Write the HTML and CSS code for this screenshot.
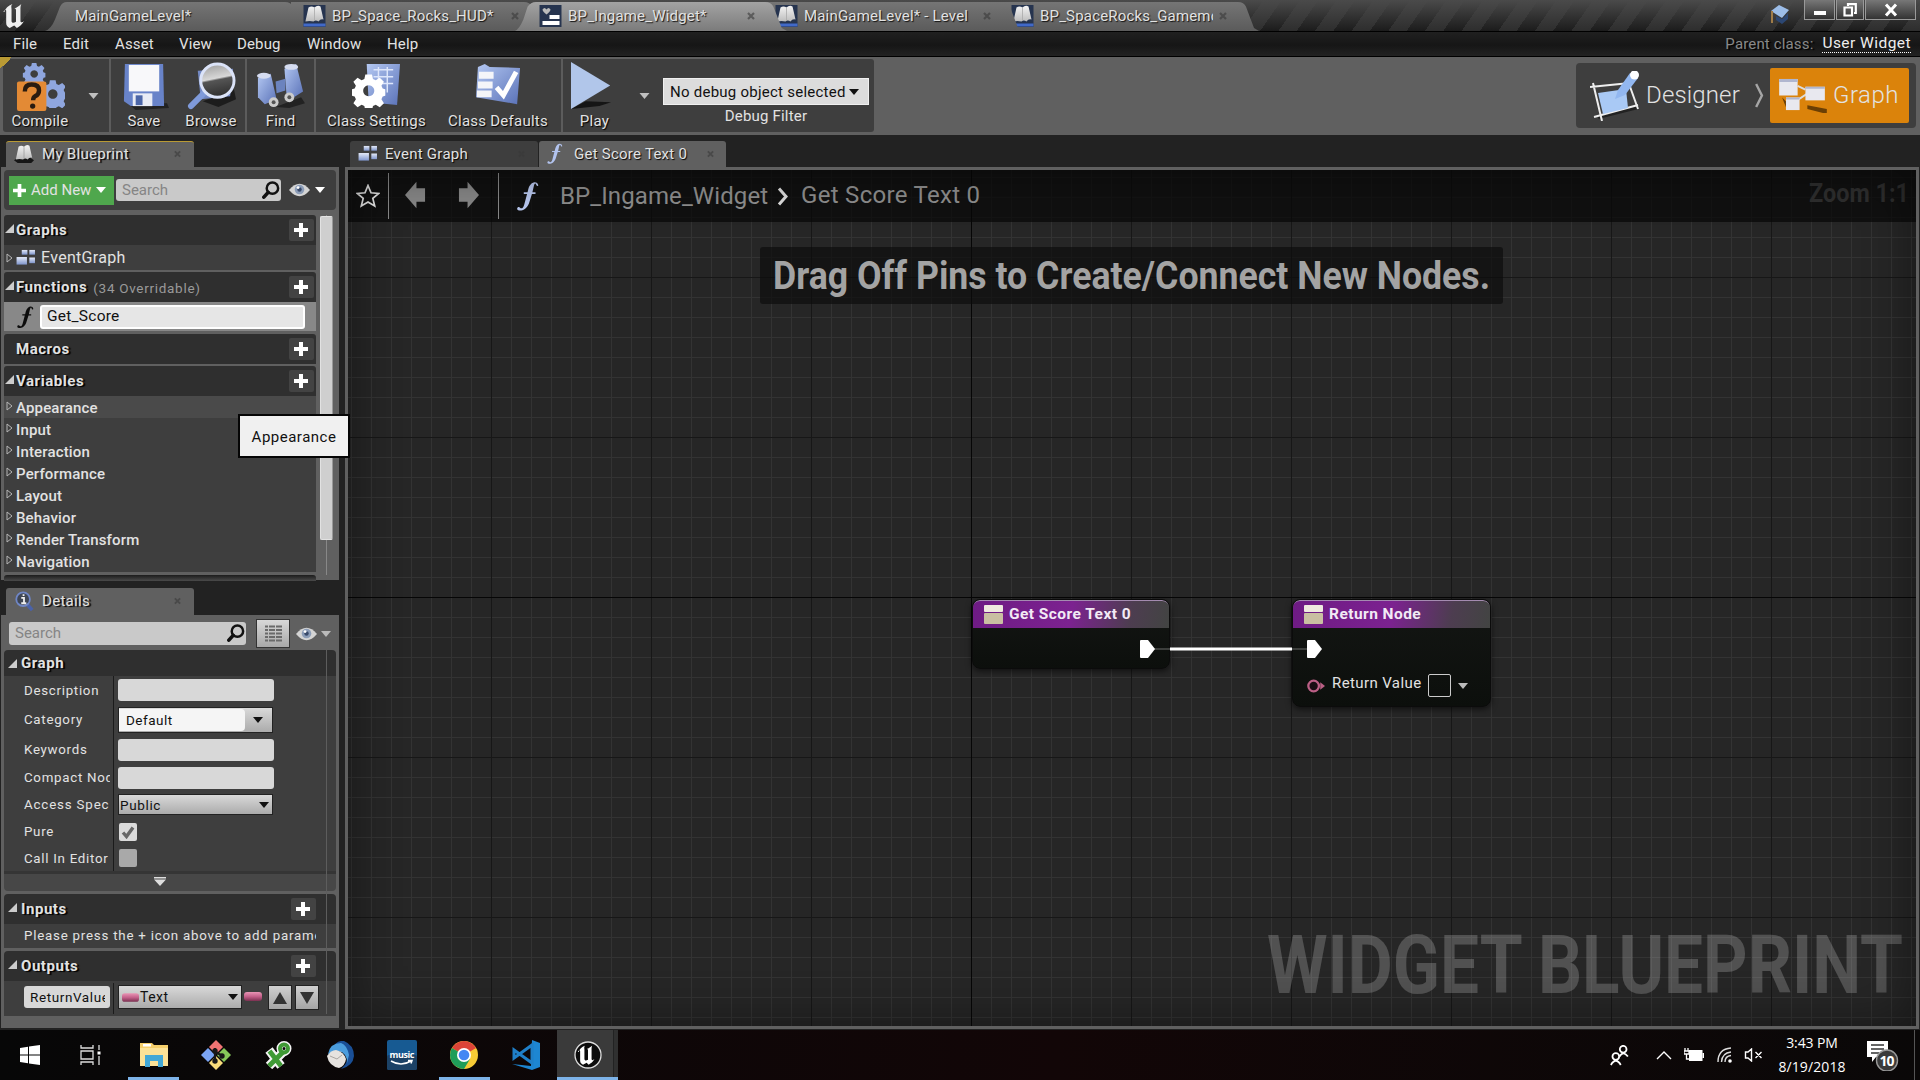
FILE: index.html
```html
<!DOCTYPE html>
<html lang="en">
<head>
<meta charset="utf-8">
<title>BP_Ingame_Widget</title>
<link rel="stylesheet" href="styles.css">
</head>
<body>
<svg class="defs" width="0" height="0">
  <defs>
    <linearGradient id="blue" x1="0" y1="0" x2="1" y2="1"><stop offset="0" stop-color="#b4c8f2"/><stop offset="1" stop-color="#5a72b8"/></linearGradient>
    <linearGradient id="pale" x1="0" y1="0" x2="0" y2="1"><stop offset="0" stop-color="#e4eaf8"/><stop offset="1" stop-color="#7f95cc"/></linearGradient>
    <linearGradient id="page" x1="0" y1="0" x2="0" y2="1"><stop offset="0" stop-color="#f4f4f4"/><stop offset="1" stop-color="#bdbdbd"/></linearGradient>
    <linearGradient id="tabg" x1="0" y1="0" x2="0" y2="1"><stop offset="0" stop-color="#757575"/><stop offset="1" stop-color="#5b5b5b"/></linearGradient>
    <linearGradient id="tabon" x1="0" y1="0" x2="0" y2="1"><stop offset="0" stop-color="#a3a3a3"/><stop offset="1" stop-color="#7b7b7b"/></linearGradient>
    <linearGradient id="lens" x1="0" y1="0" x2=".2" y2="1"><stop offset="0" stop-color="#999"/><stop offset=".5" stop-color="#d8d8d8"/><stop offset=".56" stop-color="#555"/><stop offset="1" stop-color="#333"/></linearGradient>
    <linearGradient id="pill" x1="0" y1="0" x2="0" y2="1"><stop offset="0" stop-color="#e995b5"/><stop offset=".5" stop-color="#c4608a"/><stop offset="1" stop-color="#7a3050"/></linearGradient>
  </defs>
  <symbol id="gear" viewBox="-12 -12 24 24"><path fill-rule="evenodd" d="M-2.4-11.5h4.8l.7 3.2 2 .9 2.9-1.8 3 3-1.800 2.900.900 2 3 .7v4.200l-3 .7-.900 2 1.800 2.900-3 3-2.900-1.800-2 .9-.7 3.200h-4.800l-.7-3.200-2-.9-2.900 1.800-3-3 1.800-2.900-.9-2-3.100-.7v-4.200l3.100-.7.9-2-1.800-2.900 3-3 2.900 1.800 2-.9zM0-3.800a4 4 0 1 0 .1 0z"/></symbol>
  <symbol id="book" viewBox="0 0 22 22"><path d="M0 18 4 15l14 0 4 3-3 3H4z" fill="#161616"/><path d="M2 17 5 3q3-2 6 0 3-3 6-1l3 13q-3-1-5 2-3-2-5 0-4-1-8 0z" fill="url(#page)"/><path d="M11 3.500V16" stroke="#999" stroke-width=".8" fill="none"/></symbol>
  <symbol id="bookicon" viewBox="0 0 22 22"><rect width="22" height="22" fill="#26344f"/><rect y="18.500" width="22" height="3" fill="#4169c8"/><path d="M2 16 5 2.500q3-2 6 0 3-3 6-1l3 13q-3-1-5 2-3-2-5 0-4-1-8 0z" fill="url(#page)"/><path d="M11 3v13" stroke="#aaa" stroke-width=".8" fill="none"/></symbol>
  <symbol id="nodes" viewBox="0 0 20 18"><g fill="url(#pale)"><rect x="5.500" y="1" width="6" height="5"/><rect x="13.500" y="1" width="6" height="5"/><rect x="0" y="8.500" width="11" height="8"/><rect x="13.500" y="9" width="6" height="6"/></g></symbol>
  <symbol id="func" viewBox="0 0 24 32"><path d="M23 4.500C22-.5 15 0 12.500 8l-1 4H7.500v1.800H11L8 25c-1 4-3 5-4.500 3.500C2.500 27 0 28 .5 30c.6 2.500 9 3 12.500-6l3.200-10.200H20V12h-3.300l1.300-5.500c.7-4 2-4.500 2.500-3 .5 2 2.500 2.500 2.500 1z"/></symbol>
  <symbol id="x" viewBox="0 0 8 8"><path d="M1 1l6 6M7 1 1 7" stroke="#3a3a3a" stroke-width="2.200"/></symbol>
  <symbol id="plus" viewBox="0 0 14 14"><path d="M5 0h4v5h5v4H9v5H5V9H0V5h5z" fill="#fff"/></symbol>
  <symbol id="mag" viewBox="0 0 18 20"><circle cx="10.500" cy="7.500" r="6" fill="none" stroke="#111" stroke-width="2.600"/><path d="M6 12 1.500 17" stroke="#111" stroke-width="3.800" stroke-linecap="round"/></symbol>
  <symbol id="eye" viewBox="0 0 22 14"><path d="M0 7Q11-6 22 7 11 20 0 7z" fill="#d4d4d4"/><circle cx="11" cy="6.500" r="5" fill="#8c9db8"/><circle cx="11" cy="6.500" r="2.300" fill="#394a6b"/><circle cx="9.500" cy="4.500" r="1.500" fill="#fff"/></symbol>
  <symbol id="down" viewBox="0 0 10 6"><path d="M0 0h10L5 6z"/></symbol>
  <symbol id="tri" viewBox="0 0 9 9"><path d="M9 0v9H0z" fill="#ccc"/></symbol>
  <symbol id="out" viewBox="0 0 7 10"><path d="M1 1v8l5-4z" fill="none" stroke="#b5b5b5"/></symbol>
  <symbol id="ue" viewBox="0 0 28 28"><path d="M1 9C2 5 5 2 10 0 8 2 9 4 9 6v13c0 2 2 3 5 1V7c0-2-1-2-2-2 3-1 6-3 8-5-1 2-1 4-1 6v13c0 2 2 2 4 0-2 4-5 6-8 8l-3-3-5 3c-3-2-4-3-4-6V8c0-2-1-2-4 1z"/></symbol>
  <symbol id="ret" viewBox="0 0 19 19"><rect width="19" height="7" rx="1" fill="#efeadf"/><rect y="8" width="19" height="11" rx="1" fill="#c9bfa2"/></symbol>
</svg>

<header class="titlebar">
  <svg class="ue-logo" viewBox="0 0 28 28"><use href="#ue"/></svg>
  <nav class="doctabs">
    <div class="doctab first"><svg class="shape" viewBox="0 0 260 30" preserveAspectRatio="none"><path d="M0 30Q6 28 10 18L15 5Q17 0 22 0H240Q246 0 248 5L256 27 260 30z" fill="url(#tabg)"/></svg><span>MainGameLevel*</span></div>
    <div class="doctab z1"><svg class="shape" viewBox="0 0 260 30" preserveAspectRatio="none"><path d="M0 30V0H233Q239 0 241 5L249 27 254 30z" fill="url(#tabg)"/></svg><svg class="ticon"><use href="#bookicon"/></svg><span>BP_Space_Rocks_HUD*</span><svg class="close"><use href="#x"/></svg></div>
    <div class="doctab active"><svg class="shape" viewBox="0 0 260 30" preserveAspectRatio="none"><path d="M0 30Q4 28 8 18L12 5Q15 0 20 0H239Q245 0 247 5L255 27 260 30z" fill="url(#tabon)"/></svg><svg class="ticon" viewBox="0 0 22 22"><rect width="22" height="22" fill="#26344f"/><path d="M3 4.500q2-3 4 0 2-3 4 0 0 2-4 5-4-3-4-5z" fill="#bbb"/><rect x="10" y="10" width="10" height="4" fill="#fff"/><rect x="3" y="16" width="17" height="4" fill="#fff"/></svg><span>BP_Ingame_Widget*</span><svg class="close"><use href="#x"/></svg></div>
    <div class="doctab z2"><svg class="shape" viewBox="0 0 260 30" preserveAspectRatio="none"><path d="M0 30V0H239Q245 0 247 5L255 27 260 30z" fill="url(#tabg)"/></svg><svg class="ticon"><use href="#bookicon"/></svg><span>MainGameLevel* - Level</span><svg class="close"><use href="#x"/></svg></div>
    <div class="doctab z1"><svg class="shape" viewBox="0 0 260 30" preserveAspectRatio="none"><path d="M0 30V0H239Q245 0 247 5L255 27 260 30z" fill="url(#tabg)"/></svg><svg class="ticon"><use href="#bookicon"/></svg><span>BP_SpaceRocks_Gamemode</span><svg class="close"><use href="#x"/></svg></div>
  </nav>
  <svg class="hat" viewBox="0 0 20 20"><path d="M1 6 9 0l10 5-7 8z" fill="#9cbde8"/><path d="M6 11l6 3 6-6v6l-6 5-6-4z" fill="#2c4773"/><path d="M2 6v12" stroke="#a07c48" stroke-width="2"/></svg>
  <div class="winbtns">
    <span class="wb min"><svg viewBox="0 0 14 12"><rect x="1" y="7" width="12" height="4" fill="#fff"/></svg></span>
    <span class="wb res"><svg viewBox="0 0 14 14"><path d="M5 3V1.200h7.800V10H11M1.500 4.500h7.500v8H1.500z" fill="none" stroke="#fff" stroke-width="2.200"/></svg></span>
    <span class="wb cls"><svg viewBox="0 0 14 14"><path d="M2 1.500 12 12.500M12 1.500 2 12.500" stroke="#fff" stroke-width="3"/></svg></span>
  </div>
</header>

<div class="menubar">
  <span class="m1">File</span><span class="m2">Edit</span><span class="m3">Asset</span><span class="m4">View</span><span class="m5">Debug</span><span class="m6">Window</span><span class="m7">Help</span>
  <span class="parent">Parent class:</span><a class="pclass">User Widget</a>
</div>

<div class="toolbar">
  <div class="tools">
    <div class="tool compile"><svg viewBox="0 0 50 50"><g fill="#8fa6de"><use href="#gear" x="7" y="0" width="23" height="24"/><use href="#gear" x="23" y="18" width="29" height="29"/></g><rect x="1" y="20" width="30" height="30" rx="2" fill="#e38a35"/><path d="M9 30q0-7 7-7 7.500 0 7.500 6 0 4-4 6-2 1-2 4" fill="none" stroke="#2a1c10" stroke-width="4.500"/><circle cx="17" cy="45" r="2.700" fill="#2a1c10"/></svg><span>Compile</span></div>
    <div class="drop"><svg><use href="#down"/></svg></div>
    <div class="tool save"><svg viewBox="0 0 50 50"><path d="M8 42h40l2 5-34 2z" fill="#222"/><path d="M5 2h39l1 43H11l-7-5z" fill="#6883c9"/><path d="M9 3h31v27H9z" fill="#f8f8fa"/><rect x="13" y="32" width="20" height="13" fill="#e9ecf5"/><rect x="16" y="34" width="7" height="10" fill="#4c66a8"/></svg><span>Save</span></div>
    <div class="tool browse"><svg viewBox="0 0 50 50"><path d="M16 40l32-12 2 10-18 8z" fill="#1c1c1c"/><path d="M11 9l36-2-3 28-30 3z" fill="#7389c4"/><path d="M17 32 4 45" stroke="#7f9ada" stroke-width="6" stroke-linecap="round"/><circle cx="31" cy="19" r="17" fill="url(#lens)" stroke="#dbe3f8" stroke-width="3"/></svg><span>Browse</span></div>
    <div class="tool find"><svg viewBox="0 0 50 50"><path d="M20 46l26-10 4 6-16 5z" fill="#222"/><path d="M2 16 15 12l6 26-12 5-7-7z" fill="url(#blue)"/><path d="M29 7 41 2l7 28-11 7-6-5z" fill="url(#blue)"/><path d="M20 20l10-3v12l-9 3z" fill="#6b83be"/><ellipse cx="8" cy="14" rx="7" ry="3" fill="#d5dcf0"/><ellipse cx="36" cy="5" rx="7" ry="3" fill="#d5dcf0"/><circle cx="18" cy="41" r="5" fill="#ccc"/><circle cx="34" cy="36" r="5" fill="#ccc"/><circle cx="18" cy="41" r="2" fill="#555"/><circle cx="34" cy="36" r="2" fill="#555"/></svg><span>Find</span></div>
    <div class="tool settings"><svg viewBox="0 0 50 50"><path d="M15 2h34l-3 42-29-3z" fill="url(#blue)"/><path d="M22 8h20M22 15h20M22 22h20M27 5v26M36 5v26" stroke="#dde6fb" stroke-width="1.500"/><use href="#gear" x="0" y="11" width="34" height="36" fill="#fff"/></svg><span>Class Settings</span></div>
    <div class="tool defaults"><svg viewBox="0 0 50 50"><path d="M4 5l7-3 5 3 31 1-3 37-42-7z" fill="url(#blue)"/><path d="M5 10h15v7H5zM4 20h15v7H4zM3 29h15v7H3z" fill="#f4f5f9"/><path d="M23 26l7 8L43 10" stroke="#fff" stroke-width="5" fill="none"/></svg><span>Class Defaults</span></div>
    <div class="tool play"><svg viewBox="0 0 50 50"><path d="M1 48 16 40 42 41 30 45z" fill="#151515"/><path d="M1 0 41 24 1 48z" fill="#b1c6ea"/></svg><span>Play</span></div>
    <div class="drop d2"><svg><use href="#down"/></svg></div>
    <div class="debug"><div class="debugsel"><span>No debug object selected</span><svg><use href="#down"/></svg></div><p>Debug Filter</p></div>
  </div>
  <div class="modes">
    <svg class="dicon" viewBox="0 0 50 50"><path d="M8 46 48 36" stroke="#222" stroke-width="4"/><path d="M0 16 40 12M4 46 48 34M3 12 12 50M38 10 48 38" stroke="#eee" stroke-width="2"/><path d="M8 22 36 18 38 37 13 43z" fill="#a9c9f5"/><path d="M25 28l3-9L40 2l8 5L35 24z" fill="#92b7f0"/><circle cx="44.500" cy="4" r="4.500" fill="#fff"/></svg>
    <span class="dlabel">Designer</span>
    <svg class="chev" viewBox="0 0 12 26"><path d="M2 1l6 12-6 12" fill="none" stroke="#a5a5a5" stroke-width="2.500"/></svg>
    <div class="graphbtn"><svg viewBox="0 0 50 36"><path d="M8 24 4 20 8 30zM30 28l20 4v5l-20-5z" fill="#6b3f04"/><path d="M20 8l8 4M18 24l12-8" stroke="#ddd" stroke-width="2"/><rect x="1" y="1" width="19" height="17" fill="#e8e8ef"/><rect x="28" y="9" width="20" height="14" fill="#e8e8ef"/><rect x="8" y="20" width="14" height="13" fill="#e8e8ef"/><path d="M1 1h19v3H1zM28 9h20v2H28zM8 20h14v2H8z" fill="#b0b6cf"/></svg><span>Graph</span></div>
  </div>
</div>

<main class="work">
  <aside class="side">
    <div class="ptab blue-tab"><svg class="pi"><use href="#book"/></svg><span>My Blueprint</span><svg class="close"><use href="#x"/></svg></div>
    <section class="panel mybp">
      <div class="bpbar">
        <div class="addnew"><svg class="pl"><use href="#plus"/></svg><span>Add New</span><svg class="dn"><use href="#down"/></svg></div>
        <div class="search"><span>Search</span><svg><use href="#mag"/></svg></div>
        <svg class="eye"><use href="#eye"/></svg><svg class="dn"><use href="#down"/></svg>
      </div>
      <div class="bpbody">
        <div class="list">
          <div class="cat"><svg class="tri"><use href="#tri"/></svg><b>Graphs</b><i class="add"><svg><use href="#plus"/></svg></i></div>
          <div class="item eg"><svg class="out"><use href="#out"/></svg><svg class="ni"><use href="#nodes"/></svg><span>EventGraph</span></div>
          <div class="cat g2"><svg class="tri"><use href="#tri"/></svg><b>Functions</b><small>(34 Overridable)</small><i class="add"><svg><use href="#plus"/></svg></i></div>
          <div class="item fn"><svg class="fi"><use href="#func"/></svg><div class="rename">Get_Score</div></div>
          <div class="cat g3"><b>Macros</b><i class="add"><svg><use href="#plus"/></svg></i></div>
          <div class="cat g2"><svg class="tri"><use href="#tri"/></svg><b>Variables</b><i class="add"><svg><use href="#plus"/></svg></i></div>
          <div class="var hov"><svg class="out"><use href="#out"/></svg>Appearance</div>
          <div class="var"><svg class="out"><use href="#out"/></svg>Input</div>
          <div class="var"><svg class="out"><use href="#out"/></svg>Interaction</div>
          <div class="var"><svg class="out"><use href="#out"/></svg>Performance</div>
          <div class="var"><svg class="out"><use href="#out"/></svg>Layout</div>
          <div class="var"><svg class="out"><use href="#out"/></svg>Behavior</div>
          <div class="var"><svg class="out"><use href="#out"/></svg>Render Transform</div>
          <div class="var"><svg class="out"><use href="#out"/></svg>Navigation</div>
          <div class="peek"></div>
        </div>
        <div class="scroll"><div class="thumb"></div></div>
      </div>
      <div class="tooltip">Appearance</div>
    </section>

    <div class="ptab details-tab"><svg class="pi" viewBox="0 0 22 22"><path d="M14 14l6 7" stroke="#4a62a8" stroke-width="4"/><circle cx="10" cy="9" r="7.500" fill="#3f4654" stroke="#6f86c6" stroke-width="2"/><path d="M8 7.500h3V13M8 13.500h5.500M9.500 4.500h2" stroke="#eee" stroke-width="2" fill="none"/></svg><span>Details</span><svg class="close"><use href="#x"/></svg></div>
    <section class="panel details">
      <div class="dbar">
        <div class="search"><span>Search</span><svg><use href="#mag"/></svg></div>
        <div class="matrix"><svg viewBox="0 0 17 18"><path d="M0 1.500h17M0 5h17M0 8.500h17M0 12h17M0 15.500h17" stroke="#6a6a6a" stroke-width="2" stroke-dasharray="3 1 6 1 6 0"/></svg></div>
        <svg class="eye"><use href="#eye"/></svg><svg class="dn"><use href="#down"/></svg>
      </div>
      <div class="dbody">
        <div class="dcat top"><svg class="tri"><use href="#tri"/></svg><b>Graph</b></div>
        <div class="prop h28"><label>Description</label><div class="val"><div class="inp"></div></div></div>
        <div class="prop h31"><label>Category</label><div class="val"><div class="combo big"><span>Default</span><i><svg><use href="#down"/></svg></i></div></div></div>
        <div class="prop h29"><label>Keywords</label><div class="val"><div class="inp"></div></div></div>
        <div class="prop h27"><label>Compact Node Title</label><div class="val"><div class="inp"></div></div></div>
        <div class="prop h27"><label class="acc">Access Specifier</label><div class="val"><div class="combo flat"><span>Public</span><svg><use href="#down"/></svg></div></div></div>
        <div class="prop h27"><label>Pure</label><div class="val"><div class="check on"><svg viewBox="0 0 14 14"><path d="M2 7.500l3.500 4L12 2.500" stroke="#666" stroke-width="3.400" fill="none"/></svg></div></div></div>
        <div class="prop h26"><label>Call In Editor</label><div class="val"><div class="check"></div></div></div>
        <div class="adv"><svg viewBox="0 0 12 9"><path d="M0 0h12v1.500H0zM0 2.500h12L6 9z" fill="#ddd"/></svg></div>
        <div class="dcat"><svg class="tri"><use href="#tri"/></svg><b>Inputs</b><i class="add"><svg><use href="#plus"/></svg></i></div>
        <div class="msg"><span>Please press the + icon above to add parameters</span></div>
        <div class="dcat"><svg class="tri"><use href="#tri"/></svg><b>Outputs</b><i class="add"><svg><use href="#plus"/></svg></i></div>
        <div class="outrow">
          <div class="oname"><div class="oi">ReturnValue</div></div>
          <div class="combo txt"><svg class="pill" viewBox="0 0 18 9"><rect width="18" height="9" rx="3" fill="url(#pill)"/></svg><span>Text</span><svg class="dn"><use href="#down"/></svg></div>
          <svg class="pill" viewBox="0 0 18 9"><rect width="18" height="9" rx="3" fill="url(#pill)"/></svg>
          <div class="sq"><svg viewBox="0 0 14 12"><path d="M7 0l7 12H0z"/></svg></div>
          <div class="sq"><svg viewBox="0 0 14 12"><path d="M0 0h14L7 12z"/></svg></div>
        </div>
        <div class="vline"></div>
      </div>
    </section>
  </aside>

  <section class="editor">
    <div class="gtabs">
      <div class="gtab"><svg class="ni"><use href="#nodes"/></svg><span>Event Graph</span><svg class="close"><use href="#x"/></svg></div>
      <div class="gtab on"><svg class="fi"><use href="#func"/></svg><span>Get Score Text 0</span><svg class="close"><use href="#x"/></svg></div>
    </div>
    <div class="canvas">
      <div class="crumbs">
        <svg class="star" viewBox="0 0 24 24"><path d="M12 1.500l3 7.300 7.700.6-5.900 5 1.900 7.600L12 17.900 5.300 22l1.900-7.600-5.900-5 7.700-.6z" fill="none" stroke="#e8e8e8" stroke-width="1.700"/></svg>
        <i class="sep"></i>
        <svg class="arr" viewBox="0 0 22 28"><path d="M0 14 12 0v7h9v14h-9v7z" fill="#868686"/></svg>
        <svg class="arr r" viewBox="0 0 22 28"><path d="M22 14 10 0v7H1v14h9v7z" fill="#868686"/></svg>
        <i class="sep"></i>
        <svg class="cf"><use href="#func"/></svg>
        <span class="c1">BP_Ingame_Widget</span>
        <svg class="cc" viewBox="0 0 12 18"><path d="M2 1l7 8-7 8" fill="none" stroke="#ddd" stroke-width="3"/></svg>
        <span class="c2">Get Score Text 0</span>
        <svg class="zoom" width="100" height="28"><text x="0" y="20" textLength="100" lengthAdjust="spacingAndGlyphs">Zoom 1:1</text></svg>
      </div>
      <div class="hint"><svg width="717" height="57"><text x="0" y="42" textLength="717" lengthAdjust="spacingAndGlyphs">Drag Off Pins to Create/Connect New Nodes.</text></svg></div>
      <svg class="wire" width="154" height="4"><path d="M0 2h16M138 2h16" stroke="#3c3e3c" stroke-width="2"/><path d="M16 2h122" stroke="#fff" stroke-width="3"/></svg>
      <div class="node n1">
        <div class="nh"><svg><use href="#ret"/></svg><span>Get Score Text 0</span></div>
        <svg class="exec" viewBox="0 0 15 18"><path d="M1 0h7l7 9-7 9H1q-1 0-1-1V1q0-1 1-1z" fill="#fff"/></svg>
      </div>
      <div class="node n2">
        <div class="nh"><svg><use href="#ret"/></svg><span>Return Node</span></div>
        <svg class="exec" viewBox="0 0 15 18"><path d="M1 0h7l7 9-7 9H1q-1 0-1-1V1q0-1 1-1z" fill="#fff"/></svg>
        <div class="rv"><svg class="pin" viewBox="0 0 19 14"><circle cx="7" cy="7" r="5.600" fill="#1a0d13" stroke="#bb5f85" stroke-width="2.400"/><path d="M14 3l5 4-5 4z" fill="#bb5f85"/></svg><span>Return Value</span><i></i><svg class="dn"><use href="#down"/></svg></div>
      </div>
      <svg class="mark" width="636" height="76"><text x="0" y="67" textLength="636" lengthAdjust="spacingAndGlyphs">WIDGET BLUEPRINT</text></svg>
    </div>
  </section>
</main>

<footer class="taskbar">
  <div class="tb"><svg width="20" height="20" viewBox="0 0 20 20"><path d="M0 3l8-1.200V9.500H0zM9 1.600 20 0v9.500H9zM0 10.500h8v7.700L0 17zM9 10.500h11V20L9 18.400z" fill="#fff"/></svg></div>
  <div class="tb"><svg width="22" height="20" viewBox="0 0 22 20"><path d="M1 0v3h12V0M1 20v-3h12v3M1 6h12v8H1zM19 0v5M19 11v9" fill="none" stroke="#ddd" stroke-width="1.300"/><rect x="17.500" y="6.500" width="3" height="3" fill="#fff"/></svg></div>
  <div class="tb run"><svg width="28" height="24" viewBox="0 0 28 24"><path d="M0 0h12l2 2h14v21H0z" fill="#f5cf6b"/><path d="M0 5h28v18H0z" fill="#fbe297"/><rect x="3" y="1" width="8" height="2.500" fill="#fff"/><path d="M5 12h18v12h-5v-6h-8v6H5z" fill="#42a8d6"/></svg></div>
  <div class="tb"><svg width="30" height="30" viewBox="0 0 30 30"><path d="M15 0l7 7-7 7-7-7z" fill="#f27474"/><path d="M7 8l7 7-7 7-7-7z" fill="#7ba5f5"/><path d="M23 8l7 7-7 7-7-7z" fill="#86c95a"/><path d="M15 16l7 7-7 7-7-7z" fill="#f8dc7a"/><path d="M14 8v14M14 12l8 4" stroke="#181818" stroke-width="2.200"/><circle cx="14" cy="11" r="2.700" fill="#181818"/><circle cx="21" cy="16" r="2.700" fill="#181818"/><circle cx="14" cy="21" r="2.700" fill="#181818"/></svg></div>
  <div class="tb"><svg width="28" height="28" viewBox="0 0 28 28"><g fill="none"><path d="M5 9l12 16M19 11 5 25" stroke="#f4f4f4" stroke-width="9"/><circle cx="20" cy="7.500" r="4.500" stroke="#f4f4f4" stroke-width="6"/><path d="M5.500 10l11.500 15M19 11 5 25" stroke="#3f9a35" stroke-width="4.800"/><circle cx="20" cy="7.500" r="4" stroke="#3f9a35" stroke-width="4"/></g></svg></div>
  <div class="tb"><svg width="28" height="28" viewBox="0 0 28 28"><path d="M6 8Q10-1 18 0q10 4 10 15-1 10-13 13Q24 20 20 12z" fill="#1a4f96"/><path d="M2 13Q4 2 15 2q6 2 8 12l-2 8q0-10-8-12z" fill="#4b9ddd"/><path d="M1 15Q5 9 10 9q8 2 10 9-1 7-7 9Q3 25 1 15z" fill="#e6e3df"/><path d="M4 15l7 3 5-4" fill="none" stroke="#aaa6a2"/></svg></div>
  <div class="tb"><svg width="30" height="30" viewBox="0 0 30 30"><rect width="30" height="30" rx="2" fill="#175a92"/><rect y="15" width="30" height="15" rx="2" fill="#1c4266"/><text x="2.500" y="18" textLength="25" class="mus">music</text><path d="M4 21q10 6 20 0M21 20.500h4l-1 3" fill="none" stroke="#fff" stroke-width="1.500"/></svg></div>
  <div class="tb run"><svg width="28" height="28" viewBox="-14 -14 28 28"><circle r="14" fill="#f7cb35"/><path d="M0 0-12.100-7A14 14 0 0 1 12.100-7z" fill="#dc4437"/><path d="M0 0-12.100-7A14 14 0 0 0 0 14l6-10z" fill="#1f9d59"/><circle r="7" fill="#fff"/><circle r="5.300" fill="#4587f3"/></svg></div>
  <div class="tb"><svg width="28" height="30" viewBox="0 0 28 30"><path d="M20 0l8 3v24l-8 3L0 24l19 2z" fill="#1d86d2"/><path d="M20 5v18L2 10v8z" fill="none" stroke="#1f7fc8" stroke-width="3"/></svg></div>
  <div class="tb run cur"><svg width="28" height="28" viewBox="0 0 28 28"><circle cx="14" cy="14" r="13" fill="#0c0c0c" stroke="#ddd" stroke-width="1.300"/><use href="#ue" x="4" y="4.500" width="20" height="20" fill="#fff"/></svg></div>
  <div class="tray">
    <svg class="people" viewBox="0 0 18 20"><g fill="none" stroke="#fff" stroke-width="1.700"><circle cx="12.500" cy="4" r="3.200"/><path d="M9 11q3.500-6 8 0"/><circle cx="5.500" cy="11" r="3.200"/><path d="M.8 19q4.700-8 9.400 0"/></g></svg>
    <svg class="up" viewBox="0 0 16 9"><path d="M1 8l7-7 7 7" fill="none" stroke="#fff" stroke-width="1.400"/></svg>
    <svg class="bat" viewBox="0 0 20 14"><path d="M1 0v3M4 0v3M0 3h5v3H0zM2.500 6v5H5" stroke="#fff" fill="none" stroke-width="1.300"/><rect x="5.500" y="2.500" width="12.500" height="10" fill="#fff" stroke="#fff"/><rect x="18.500" y="5" width="1.500" height="5" fill="#fff"/></svg>
    <svg class="wifi" viewBox="0 0 16 16"><g fill="none" stroke="#ddd" stroke-width="1.400"><path d="M1 15Q1 2 14 1" /><path d="M4.500 15Q5 6 14 5"/><path d="M8 15q0-6 6-6.500"/></g><circle cx="13" cy="14" r="1.800" fill="#fff"/></svg>
    <svg class="spk" viewBox="0 0 18 14"><path d="M1 4h2.500L7 1v12l-3.500-3H1zM11 4l6 6M17 4l-6 6" fill="none" stroke="#fff" stroke-width="1.400"/></svg>
    <div class="clock"><span>3:43 PM</span><span class="dt">8/19/2018</span></div>
    <div class="notif"><svg viewBox="0 0 32 32"><path d="M0 2h21v16H9l-4 5v-5H0z" fill="#fff"/><path d="M4 6h13M4 10h13M4 14h8" stroke="#333" stroke-width="1.300"/><circle cx="20" cy="21.500" r="10.500" fill="#3a3a3a" stroke="#999" stroke-width="1.400"/><text x="12.500" y="27" textLength="15">10</text></svg></div>
    <i class="peekline"></i>
  </div>
</footer>
</body>
</html>
```
FILE: styles.css
```css
* { box-sizing: border-box; }
body { margin: 0; width: 1920px; height: 1080px; overflow: hidden; background: #222; font-family: Roboto, "Liberation Sans", sans-serif; font-size: 15px; color: #e2e2e2; display: flex; flex-direction: column; }
svg { display: block; flex: none; }
.defs { position: absolute; }
i { font-style: normal; }
span, b { white-space: nowrap; }

/* Title bar */
.titlebar { height: 31px; display: flex; align-items: flex-start; background: linear-gradient(#4a4a4a, rgba(40,40,40,.3)), repeating-linear-gradient(125deg, #161616 0 15px, #303030 15px 30px); }
.ue-logo { width: 30px; height: 25px; margin: 4px 0 0 1px; fill: #f0f0f0; }
.doctabs { display: flex; width: 1224px; margin: 2px 0 0 14px; height: 29px; }
.doctab { position: relative; width: 236px; height: 29px; flex: none; display: flex; align-items: center; text-shadow: 1px 1px 1px #111; padding-left: 6px; padding-bottom: 1px; }
.doctab.first { width: 252px; padding-left: 30px; z-index: 2; }
.doctab .shape { position: absolute; left: -6px; top: 0; width: 260px; height: 29px; }
.doctab.first .shape { left: 0; }
.doctab.active { z-index: 3; }
.doctab.active .shape { left: -18px; width: 272px; }
.doctab.z2 { z-index: 1; }
.ticon { position: relative; width: 23px; height: 22px; margin-right: 6px; }
.doctab span { position: relative; width: 173px; overflow: hidden; letter-spacing: .18px; line-height: 22px; }
.close { position: relative; width: 8px; height: 8px; margin-left: 6px; opacity: .6; }
.hat { width: 20px; height: 20px; margin: 5px 14px 0 501px; }
.winbtns { display: flex; gap: 1px; height: 20px; }
.wb { display: flex; align-items: center; justify-content: center; background: linear-gradient(#777, #333); border: 1px solid #999; border-top: 0; height: 20px; }
.wb svg { width: 14px; height: 14px; }
.wb.min { width: 31px; } .wb.res { width: 28px; } .wb.cls { width: 51px; }

/* Menu bar */
.menubar { height: 26px; background: linear-gradient(#202020, #161616 55%, #222); border-top: 1px solid #000; border-bottom: 1px solid #000; display: flex; align-items: center; padding: 0 0 1px 13px; letter-spacing: .15px; }
.m1 { width: 50px; } .m2 { width: 52px; } .m3 { width: 64px; } .m4 { width: 58px; } .m5 { width: 70px; } .m6 { width: 80px; }
.parent { margin-left: auto; color: #888; text-shadow: 2px 1px 1px #000; margin-right: 9px; }
.pclass { border-bottom: 1px dotted #fff; color: #eee; line-height: 17px; margin-right: 9px; font-size: 15.500px; letter-spacing: .45px; }

/* Toolbar */
.toolbar { height: 78px; background: linear-gradient(135deg, #b99a34 0 8px, transparent 8px), #606060; display: flex; align-items: flex-start; padding-top: 2px; justify-content: space-between; }
.tools { position: relative; width: 871px; height: 73px; background: #3e3e3e; margin-left: 3px; border-radius: 3px; display: flex; background: linear-gradient(135deg, #b99a34 0 5px, transparent 5px), #3e3e3e; }
.tool { height: 73px; display: flex; flex-direction: column; align-items: center; text-shadow: 1px 1px 1px #000; padding-top: 3px; letter-spacing: .25px; }
.tool svg { width: 49px; height: 49px; }
.tool span { line-height: 18px; margin-top: 1px; }
.compile { width: 74px; }
.drop { width: 34px; border-right: 2px solid #5c5c5c; padding: 34px 0 0 11px; fill: #c0c0c0; }
.drop svg { width: 11px; height: 6px; }
.d2 { width: 37px; border: 0; padding-left: 13px; }
.save { width: 66px; } .browse { width: 70px; border-right: 2px solid #5c5c5c; }
.find { width: 69px; border-right: 2px solid #5c5c5c; }
.settings { width: 121px; } .defaults { width: 126px; border-right: 2px solid #5c5c5c; padding-right: 2px; }
.play { width: 63px; }
.debug { width: 206px; padding-top: 19px; }
.debugsel { height: 27px; background: #dcdcdc; border: 1px solid #f0f0f0; color: #111; display: flex; align-items: center; justify-content: space-between; padding: 0 9px 0 6px; fill: #111; letter-spacing: .25px; }
.debugsel svg { width: 10px; height: 6px; }
.debug p { margin: 2px 0 0; text-align: center; line-height: 18px; letter-spacing: .2px; }
.modes { width: 340px; height: 65px; margin: 4px 4px 0 0; background: #3e3e3e; border-radius: 4px; display: flex; align-items: center; font-size: 24px; font-weight: 300; }
.modes span { margin-top: -2px; }
.dicon { width: 50px; height: 50px; margin-left: 14px; }
.dlabel { width: 108px; margin-left: 6px; letter-spacing: .15px; }
.chev { width: 12px; height: 25px; }
.graphbtn { width: 139px; height: 55px; background: #db830b; border-radius: 2px; display: flex; align-items: center; margin-left: 4px; padding-left: 8px; letter-spacing: .5px; }
.graphbtn svg { width: 49px; height: 35px; margin-right: 6px; }

/* Work area */
.work { height: 895px; display: flex; padding-top: 6px; }
.side { width: 345px; padding-left: 1px; flex: none; }
.ptab { width: 188px; height: 26px; margin-left: 5px; background: #606060; border-radius: 3px 3px 0 0; display: flex; align-items: center; padding: 0 0 2px 8px; text-shadow: 2px 1px 1px #000; letter-spacing: .3px; }
.blue-tab { border-top: 1px solid #b99a34; }
.pi { width: 20px; height: 20px; margin-right: 8px; }
.ptab span { width: 125px; }
.ptab .close { margin-left: 7px; width: 7px; }
.panel { width: 338px; background: #606060; padding: 3px; position: relative; }
.mybp { height: 413px; }
.bpbar { height: 40px; background: #3e3e3e; border-radius: 4px; display: flex; align-items: center; padding-left: 5px; }
.addnew { width: 105px; height: 29px; background: #4fa74d; display: flex; align-items: center; padding-left: 4px; margin-right: 2px; }
.pl { width: 13px; height: 13px; margin-right: 5px; }
.addnew span { width: 65px; }
.addnew .dn, .bpbar > .dn { width: 10px; height: 6px; fill: #fff; }
.search { background: #c9c9c9; width: 165px; height: 22px; border-radius: 3px; color: #858585; display: flex; align-items: center; justify-content: space-between; padding: 0 1px 0 6px; }
.search span { margin-top: -1px; }
.search svg { width: 18px; height: 19px; }
.eye { width: 21px; height: 14px; margin: 0 5px 0 8px; }
.bpbody { display: flex; margin-top: 5px; }
.list { width: 312px; }
.cat { height: 30px; background: #2f2f2f; display: flex; align-items: center; position: relative; padding-left: 12px; text-shadow: 2px 1px 1px #000; border-radius: 3px 3px 0 0; font-size: 15px; }
.tri { width: 9px; height: 9px; position: absolute; left: 1px; top: 9px; }
.cat b, .dcat b { font-weight: 700; letter-spacing: .55px; }
.cat small { font-size: 13.500px; color: #9a9a9a; margin: 2px 0 0 6px; letter-spacing: .7px; text-shadow: none; }
.add { width: 25px; height: 22px; background: #434343; border-radius: 2px; display: flex; align-items: center; justify-content: center; position: absolute; right: 2px; top: 4px; padding-right: 1px; }
.add svg { width: 14px; height: 14px; margin-top: -1px; }
.item { display: flex; align-items: center; background: #3e3e3e; }
.out { width: 7px; height: 10px; }
.eg { height: 25px; padding-left: 2px; font-size: 16px; letter-spacing: .3px; }
.ni { width: 20px; height: 17px; }
.eg .ni { margin: 0 5px 0 3px; }
.g2 { margin-top: 2px; } .g3 { margin-top: 3px; }
.fn { height: 29px; background: #888; padding-left: 13px; }
.fn .fi { width: 17px; height: 24px; margin-right: 6px; fill: #0c0c0c; }
.rename { width: 265px; height: 24px; border: 2px solid #fff; border-radius: 3px; background: #e6e6e6; color: #111; padding-left: 5px; line-height: 19px; font-size: 15.500px; letter-spacing: .25px; }
.var { height: 22px; background: #3e3e3e; display: flex; align-items: center; padding: 2px 0 0 2px; font-weight: 500; font-size: 15px; letter-spacing: .15px; }
.var .out { margin: -4px 3px 0 0; }
.var.hov { background: #4a4a4a; }
.peek { height: 6px; margin-top: 3px; background: linear-gradient(#1c1c1c, #4a4a4a); border-radius: 3px 3px 0 0; }
.scroll { width: 13px; margin-left: 4px; height: 360px; background: linear-gradient(#888, #888) 6px 0 / 1px 100% no-repeat; }
.thumb { margin-top: 1px; height: 324px; background: #cfcfcf; border: 1px solid #e2e2e2; border-right-color: #999; border-radius: 2px; }
.tooltip { position: absolute; left: 237px; top: 247px; width: 112px; height: 44px; border: 2px solid #050505; background: #f0f0f0; color: #111; text-align: center; line-height: 42px; z-index: 5; letter-spacing: .5px; }

/* Details */
.details-tab { height: 27px; margin-top: 8px; }
.details { height: 413px; }
.dbar { height: 32px; display: flex; align-items: center; padding: 0 0 1px 5px; }
.dbar .search { width: 237px; height: 23px; }
.matrix { width: 34px; height: 29px; margin-left: 10px; border: 1px solid #333; background: linear-gradient(#d8d8d8, #a8a8a8); display: flex; align-items: center; justify-content: center; }
.matrix svg { width: 17px; height: 18px; }
.dbar .eye { margin: 0 4px 0 6px; }
.dbar .dn { width: 10px; height: 6px; fill: #bbb; }
.dbody { position: relative; }
.vline { position: absolute; left: 322px; top: 0; width: 1px; height: 364px; background: #5d5d5d; }
.dcat { height: 30px; background: #2f2f2f; border-radius: 4px 4px 0 0; margin-top: 3px; padding-left: 17px; display: flex; align-items: center; position: relative; text-shadow: 2px 1px 1px #000; }
.dcat.top { height: 26px; margin-top: 0; }
.dcat .tri { left: 4px; top: 9px; }
.dcat .add { right: auto; left: 287px; }
.prop { display: flex; background: #3e3e3e; }
.h26 { height: 26px; } .h27 { height: 27px; } .h28 { height: 28px; } .h29 { height: 29px; } .h31 { height: 31px; }
.prop label { width: 86px; margin-left: 20px; overflow: hidden; white-space: nowrap; font-size: 13.300px; letter-spacing: .72px; display: flex; align-items: center; }
.prop .acc { width: 85px; margin-right: 1px; letter-spacing: .85px; }
.val { margin-left: 3px; border-left: 1px solid #1b1b1b; padding-left: 4px; display: flex; align-items: center; }
.inp { width: 156px; height: 22px; background: #d8d8d8; border-radius: 3px; }
.combo { color: #111; fill: #111; border: 1px solid #222; display: flex; align-items: center; font-size: 13.500px; background: linear-gradient(#d9d9d9, #ababab); width: 155px; letter-spacing: .5px; }
.combo svg { width: 10px; height: 6px; }
.big { height: 26px; }
.big span { background: #f5f5f5; width: 126px; height: 22px; line-height: 22px; padding-left: 7px; border-radius: 0 4px 4px 0; }
.big i { margin-left: 8px; }
.flat { height: 21px; justify-content: space-between; padding: 0 3px 0 1px; letter-spacing: .65px; }
.check { width: 18px; height: 18px; border-radius: 2px; background: #a9a9a9; margin-left: 1px; }
.check.on { background: #dadada; padding: 2px; }
.check svg { width: 14px; height: 14px; }
.adv { height: 20px; background: #474747; border-top: 3px solid #353535; border-radius: 0 0 4px 4px; display: flex; padding: 3px 0 0 150px; }
.adv svg { width: 12px; height: 9px; }
.msg { height: 24px; background: #3e3e3e; font-size: 13.300px; letter-spacing: .78px; padding-left: 20px; line-height: 23px; }
.msg span { display: block; width: 292px; overflow: hidden; }
.outrow { height: 35px; background: #3e3e3e; display: flex; align-items: flex-start; padding: 4px 0 0 20px; }
.oname { width: 90px; height: 31px; border-right: 1px solid #1b1b1b; margin-top: -2px; padding-top: 3px; }
.oi { width: 86px; height: 22px; border-radius: 3px; background: #d8d8d8; color: #111; border-right: 5px solid #d8d8d8; padding-left: 6px; line-height: 22px; font-size: 13.500px; letter-spacing: .6px; overflow: hidden; }
.txt { width: 124px; height: 24px; margin: 0 2px 0 4px; padding-left: 3px; }
.combo .pill { width: 17px; height: 9px; }
.txt span { width: 89px; padding-left: 1px; font-size: 14px; }
.outrow > .pill { width: 18px; height: 9px; margin: 7px 6px 0 0; }
.sq { width: 24px; height: 25px; margin-right: 3px; border: 1px solid #222; background: linear-gradient(#d0d0d0, #a5a5a5); display: flex; align-items: center; justify-content: center; fill: #333; }
.sq svg { width: 14px; height: 12px; }

/* Graph editor */
.editor { flex: 1; }
.gtabs { display: flex; gap: 1px; height: 26px; padding-left: 5px; }
.gtab { width: 188px; background: #3e3e3e; border-radius: 3px 3px 0 0; display: flex; align-items: center; text-shadow: 1px 1px 1px #000; padding: 0 0 1px 8px; letter-spacing: .25px; }
.gtab .ni { margin-right: 7px; }
.gtab span { width: 127px; }
.gtab.on { background: #606060; width: 187px; }
.gtab .fi { width: 16px; height: 21px; margin-right: 11px; fill: #b2c3ee; }
.gtab .close { width: 7px; }
.gtab.on .close { margin-left: 6px; }
.canvas { position: relative; width: 1574px; height: 862px; border: 3px solid #606060; overflow: hidden;
  background:
    linear-gradient(#060606, #060606) 623px 0 / 1px 100% no-repeat,
    linear-gradient(#060606, #060606) 0 427px / 100% 1px no-repeat,
    linear-gradient(90deg, #171717 1px, transparent 1px) 143px 0 / 160px 160px,
    linear-gradient(#171717 1px, transparent 1px) 0 107px / 160px 160px,
    linear-gradient(90deg, #333 1px, transparent 1px) 3px 0 / 20px 20px,
    linear-gradient(#333 1px, transparent 1px) 0 7px / 20px 20px, #262626; }
.canvas::after { content: ""; position: absolute; inset: 0; box-shadow: inset 0 0 50px rgba(0,0,0,.45); pointer-events: none; }
.crumbs { height: 52px; background: rgba(8,8,8,.72); display: flex; align-items: center; font-size: 24px; letter-spacing: .1px; color: #8e8e8e; }
.star { width: 24px; height: 24px; margin-left: 8px; }
.sep { width: 1px; height: 46px; background: #888; margin-left: 8px; }
.arr { width: 21px; height: 28px; margin: -3px 0 0 16px; }
.arr.r { margin-left: 32px; }
.arr + .sep { margin-left: 19px; }
.cf { width: 24px; height: 30px; margin: 0 20px 0 17px; fill: #b9c8f0; }
.c1 { width: 217px; margin-top: -1px; }
.cc { width: 12px; height: 19px; margin-right: 12px; }
.c2 { margin-top: -3px; letter-spacing: .3px; }
.zoom { margin: 0 7px 0 auto; overflow: visible; letter-spacing: 0; }
.zoom text { font: 700 25px Roboto, sans-serif; fill: #2e2e2e; }
.hint { position: absolute; left: 412px; top: 77px; width: 743px; height: 57px; background: rgba(10,10,10,.65); border-radius: 3px; padding-left: 13px; }
.hint text { font: 700 38px Roboto, sans-serif; fill: #a3a3a3; }
.mark { position: absolute; left: 919px; top: 756px; overflow: visible; }
.mark text { font: 700 82px Roboto, sans-serif; fill: #fff; fill-opacity: .2; }
.wire { position: absolute; left: 806px; top: 477px; z-index: 2; }
.node { position: absolute; top: 429px; border-radius: 8px; background: linear-gradient(#141614, #0c0f0c); border: 1px solid #0b0b0b; box-shadow: 0 2px 6px rgba(0,0,0,.6); overflow: hidden; }
.n1 { left: 624px; width: 198px; height: 70px; }
.n2 { left: 944px; width: 199px; height: 108px; }
.nh { height: 28px; border-top: 1px solid #a48bb0; border-radius: 7px 7px 0 0; background: linear-gradient(100deg, #6e1b84 0%, #7c2290 50%, #4d3d50 80%, #424442 100%); display: flex; align-items: center; padding: 0 0 1px 11px; color: #f2eaf5; font-weight: 700; font-size: 15.500px; letter-spacing: .45px; }
.nh svg { width: 19px; height: 19px; margin-right: 6px; }
.nh span { margin-top: -1px; }
.exec { position: absolute; width: 15px; height: 18px; top: 40px; z-index: 3; }
.n1 .exec { left: 167px; } .n2 .exec { left: 14px; }
.rv { position: absolute; left: 14px; top: 73px; display: flex; align-items: center; height: 25px; font-size: 15px; letter-spacing: .4px; }
.rv .pin { width: 18px; height: 14px; margin: 0 7px 0 0; }
.rv span { width: 96px; margin-top: -6px; }
.rv i { width: 23px; height: 23px; border: 1px solid #ccc; border-radius: 2px; margin-right: 7px; }
.rv .dn { width: 10px; height: 6px; fill: #bbb; }

/* Taskbar */
.taskbar { height: 50px; background: linear-gradient(90deg, #070707, #120607 55%, #0a0808); display: flex; }
.tb { width: 62px; height: 50px; display: flex; align-items: center; justify-content: center; flex: none; padding-bottom: 1px; }
.tb:nth-child(1) { width: 60px; } .tb:nth-child(2) { width: 62px; } .tb:nth-child(3) { width: 63px; }
.tb.run { background: linear-gradient(#7db3e8, #7db3e8) center bottom / 51px 3px no-repeat; }
.tb.cur { width: 61px; background: linear-gradient(#7db3e8, #7db3e8) center bottom / 61px 3px no-repeat, linear-gradient(90deg, #3a3a3a 56px, #222 56px 57px, #303030 57px); }
.mus { font: 700 9px "Open Sans", sans-serif; fill: #fff; }
.tray { margin-left: auto; display: flex; align-items: center; height: 50px; }
.people { width: 19px; height: 21px; margin-right: 27px; }
.up { width: 16px; height: 9px; margin-right: 12px; }
.bat { width: 20px; height: 14px; margin-right: 13px; }
.wifi { width: 16px; height: 16px; margin-right: 11px; }
.spk { width: 19px; height: 14px; margin-right: 14px; }
.clock { width: 70px; display: flex; flex-direction: column; align-items: center; font: 14px "Open Sans", sans-serif; color: #fff; line-height: 24px; letter-spacing: -.1px; }
.clock .dt { letter-spacing: .1px; }
.notif { width: 32px; height: 32px; margin-left: 20px; }
.notif svg { width: 32px; height: 32px; }
.notif text { font: 700 14px "Open Sans", sans-serif; fill: #fff; }
.peekline { width: 1px; height: 50px; background: #555; margin: 0 5px 0 15px; }
```
